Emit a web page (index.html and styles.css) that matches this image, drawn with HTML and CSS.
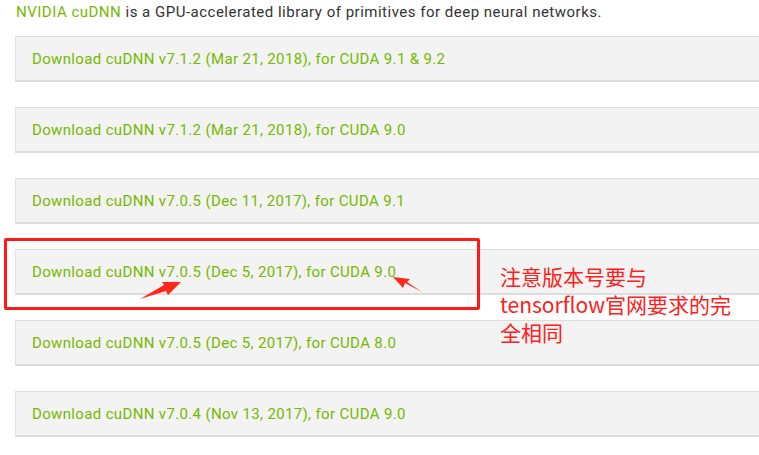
FILE: index.html
```html
<!DOCTYPE html>
<html lang="zh">
<head>
<meta charset="utf-8">
<link rel="stylesheet" href="styles.css">
</head>
<body>
<div class="page">
  <p class="intro"><span class="brand">NVIDIA cuDNN</span> is a GPU-accelerated library of primitives for deep neural networks.</p>
  <div class="list">
    <div class="panel"><a class="dl">Download cuDNN v7.1.2 (Mar 21, 2018), for CUDA 9.1 &amp; 9.2</a></div>
    <div class="panel"><a class="dl">Download cuDNN v7.1.2 (Mar 21, 2018), for CUDA 9.0</a></div>
    <div class="panel"><a class="dl">Download cuDNN v7.0.5 (Dec 11, 2017), for CUDA 9.1</a></div>
    <div class="panel"><a class="dl">Download cuDNN v7.0.5 (Dec 5, 2017), for CUDA 9.0</a></div>
    <div class="panel"><a class="dl">Download cuDNN v7.0.5 (Dec 5, 2017), for CUDA 8.0</a></div>
    <div class="panel"><a class="dl">Download cuDNN v7.0.4 (Nov 13, 2017), for CUDA 9.0</a></div>
  </div>
  <div class="highlight"></div>
  <svg class="arrows" width="759" height="455" viewBox="0 0 759 455">
    <polygon points="140,299 164,285 162,282 181,282 168,295 166,291" fill="#ff2a1a"/>
    <polygon points="422,292 405,283 403,288 393,277 410,279 407,282" fill="#ff2a1a"/>
  </svg>
  <div class="note">注意版本号要与<br>tensorflow官网要求的完<br>全相同</div>
</div>
</body>
</html>
```
FILE: styles.css
```css
html, body {
  margin: 0;
  padding: 0;
  overflow: hidden;
  background: #ffffff;
}
.page {
  position: relative;
  width: 759px;
  height: 455px;
  overflow: hidden;
  font-family: Roboto, "Liberation Sans", sans-serif;
  font-size: 15px;
  color: #333333;
}
.intro {
  margin: 0;
  padding: 3px 0 0 16px;
  line-height: 18px;
  letter-spacing: 0.5px;
}
.brand {
  color: #76b900;
}
.list {
  display: flex;
  flex-direction: column;
  gap: 25px;
  padding: 15px 0 0 15px;
}
.panel {
  width: 820px;
  height: 43px;
  box-sizing: content-box;
  background: #f3f3f3;
  border-top: 1px solid #dddddd;
  border-left: 1px solid #e2e2e2;
  border-bottom: 2px solid #dcdcdc;
  display: flex;
  align-items: center;
  padding-left: 16px;
}
.dl {
  color: #76b900;
  line-height: 18px;
  padding-top: 1px;
  letter-spacing: 0.35px;
}
.highlight {
  position: absolute;
  left: 4px;
  top: 238px;
  width: 470px;
  height: 66px;
  border: 3px solid #ff1a1a;
  border-radius: 2px;
}
.arrows {
  position: absolute;
  left: 0;
  top: 0;
}
.note {
  position: absolute;
  left: 500px;
  top: 262px;
  color: #ff2020;
  font-family: "Microsoft YaHei", "Noto Sans CJK SC", sans-serif;
  font-size: 21px;
  line-height: 28px;
}
```
